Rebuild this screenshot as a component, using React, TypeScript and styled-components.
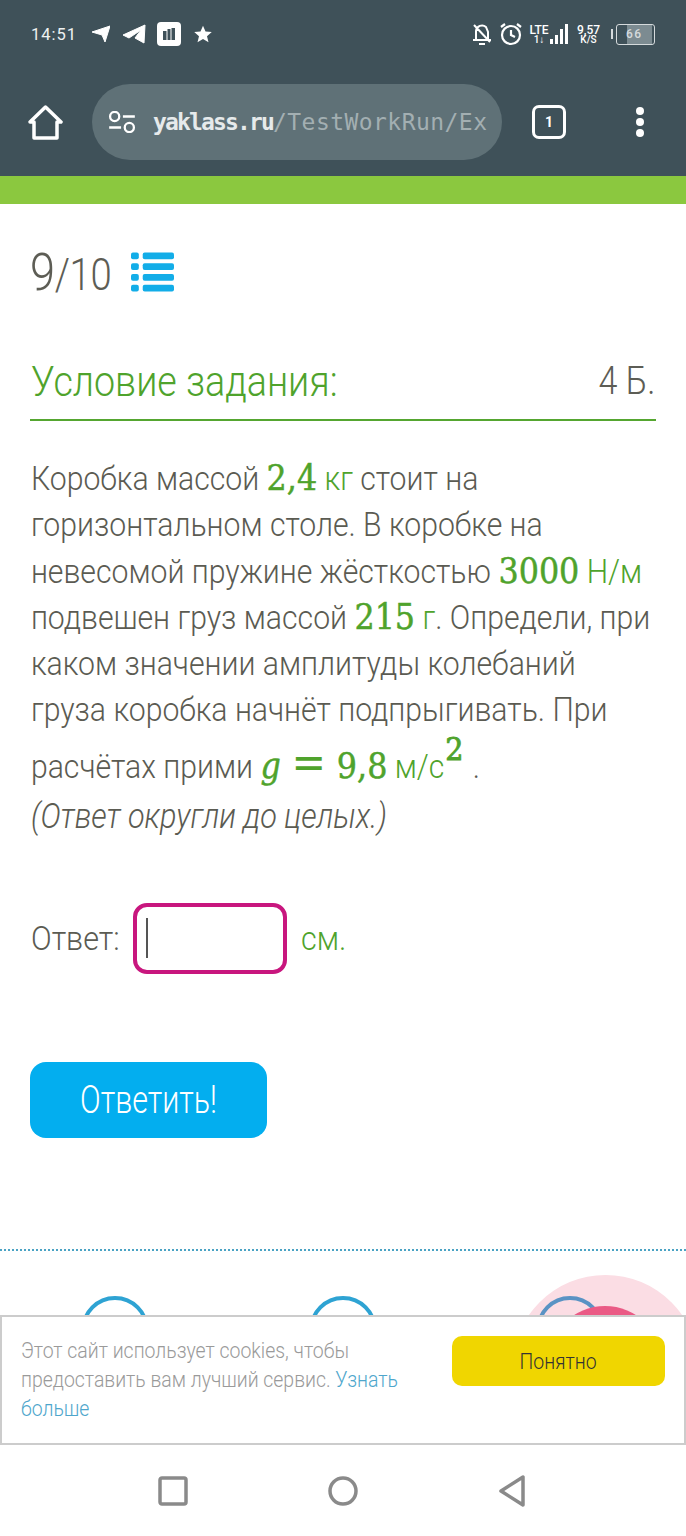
import React from "react";
import styled, { createGlobalStyle, css } from "styled-components";

const Global = createGlobalStyle`
  html, body { margin: 0; padding: 0; background: #fff; }
  body { font-family: Roboto, "Liberation Sans", sans-serif; }
  * { box-sizing: border-box; }
`;
const squeezed = css`
  display: inline-block; white-space: nowrap; transform: scaleX(0.896); transform-origin: left center;
`;
const Page = styled.div`
  position: relative; width: 686px; height: 1536px; overflow: hidden;
  display: flex; flex-direction: column; background: #fff; color: #5b5b52;
`;
const StatusBar = styled.div`
  height: 68px; background: #3f5159; color: #fff; display: flex; align-items: center;
  padding: 0 31px 0 31px; flex: none;
`;
const Clock = styled.span`font: 400 16.5px Roboto, sans-serif; letter-spacing: 1px; width: 61px; color: #eef1f1;`;
const LeftIcons = styled.div`display: flex; align-items: center; gap: 13px; flex: 1;`;
const RightIcons = styled.div`display: flex; align-items: center; gap: 6px;`;
const Tiny = styled.div<{ $w: number }>`
  display: flex; flex-direction: column; align-items: center; font: 500 12px/10px Roboto, sans-serif; width: ${p => p.$w}px;
`;
const TinySub = styled.span`font-size: 10px; line-height: 9px;`;
const Battery = styled.div`
  position: relative; width: 39px; height: 21px; border: 1.5px solid #d5dadc; border-radius: 3px; margin-left: 8px;
  font: 500 12px/18px Roboto, sans-serif; letter-spacing: 1.5px; color: #d5dadc; padding-left: 9px;
  background: linear-gradient(90deg, transparent 0 26%, #7c8b91 26% 94%, transparent 94%);
  &::before { content: ""; position: absolute; left: -6px; top: 4px; width: 2px; height: 10px; background: #d5dadc; }
`;
const Toolbar = styled.div`
  height: 108px; background: #3f5159; display: flex; align-items: center; flex: none; padding: 0 28px;
`;
const Pill = styled.div`
  width: 410px; height: 76px; margin-left: 29px; border-radius: 38px; background: #5f7177;
  display: flex; align-items: center; padding-left: 16px; gap: 17px; overflow: hidden; white-space: nowrap;
`;
const Url = styled.span`
  font: 700 23px "DejaVu Sans Mono", monospace; color: #e6eaeb; letter-spacing: -1.85px;
`;
const UrlRest = styled.span`color: #a3afb2; font-weight: 400; letter-spacing: 0.45px;`;
const TabCount = styled.div`
  width: 34px; height: 34px; border: 3px solid #fff; border-radius: 7px; color: #fff; margin-left: 30px;
  display: flex; align-items: center; justify-content: center; font: 700 14px Roboto, sans-serif;
`;
const Dots = styled.div`
  margin-left: 70px; display: flex; flex-direction: column; gap: 3px;
  & > i { display: block; width: 8px; height: 8px; border-radius: 50%; background: #fff; }
`;
const Accent = styled.div`height: 28px; background: #8bc83f; flex: none;`;
const Main = styled.main`flex: 1; padding: 36px 30px 0; display: flex; flex-direction: column; min-height: 0;`;
const Counter = styled.div`
  display: flex; align-items: center; height: 64px; color: #5d5d55; font-weight: 300;
`;
const CounterText = styled.span`${squeezed}; width: 101px; font-size: 44px; transform: scaleX(0.87); letter-spacing: -0.4px;`;
const CounterNum = styled.span`font-size: 52px;`;
const Heading = styled.div`
  margin-top: 46px; height: 71px; border-bottom: 2px solid #55a630; display: flex; justify-content: space-between;
  align-items: center; font-weight: 300; font-size: 42px; padding: 0 1px 7px;
`;
const HeadingTitle = styled.span`${squeezed}; color: #4fa32c; width: 306px;`;
const Points = styled.span`${squeezed}; color: #5d5d55; font-size: 38px; transform-origin: right center; text-align: right;`;
const Body = styled.div`
  margin-top: 35px; font-size: 33.7px; line-height: 46.3px; font-weight: 300; padding-left: 1px; width: 700px;
  transform: scaleX(0.896); transform-origin: left top; flex: none;
`;
const Line = styled.div<{ $tall?: boolean }>`white-space: nowrap; height: ${p => p.$tall ? "57px" : "46.3px"}; ${p => p.$tall ? "padding-top: 10px;" : ""}`;
const Unit = styled.span`color: #4fa32c;`;
const MathText = styled.span`
  font-family: "DejaVu Serif", serif; font-weight: 400; font-size: 35.5px; line-height: 0; color: #4fa32c;
  -webkit-text-stroke: 0.5px #4fa32c;
`;
const Eq = styled.span`font-family: "DejaVu Sans", sans-serif; font-size: 46px; margin: 0 12px; -webkit-text-stroke: 0; line-height: 0;`;
const Sup = styled.sup`font-size: 32px; line-height: 0; vertical-align: 18px; -webkit-text-stroke: 0.9px #4fa32c; margin-left: 1px; margin-right: 2px;`;
const Hint = styled.div`
  ${squeezed}; font-style: italic; font-size: 34.2px; line-height: 46px; font-weight: 300; padding-left: 1px; margin-top: 2px;
`;
const AnswerRow = styled.div`
  margin-top: 64px; display: flex; align-items: center; font-size: 34px; font-weight: 300; padding-left: 1px;
`;
const AnswerLabel = styled.span`${squeezed}; width: 88px;`;
const AnswerUnit = styled.span`${squeezed}; color: #4fa32c;`;
const Field = styled.div`
  width: 154px; height: 71px; border: 4px solid #c8167e; border-radius: 14px; margin: 0 14px; padding: 11px 0 0 9px; flex: none;
  & > i { display: block; width: 2px; height: 40px; background: #555; }
`;
const Submit = styled.button`
  margin-top: 88px; width: 237px; height: 76px; border: 0; border-radius: 16px; background: #03aeef; color: #fff; padding: 0; flex: none;
  font: 300 38px Roboto, sans-serif;
`;
const SubmitLabel = styled.span`${squeezed}; transform-origin: center; transform: scaleX(0.8);`;
const Divider = styled.div`margin: 111px -30px 0; border-top: 2px dotted #4aa3c4; flex: none;`;
const Decor = styled.div`
  margin: 0 -30px; flex: 1; position: relative; overflow: hidden;
`;
const Blob = styled.div`
  position: absolute; left: 512px; top: 24px; width: 187px; height: 187px; border-radius: 50%; background: #fbdde4;
`;
const Ring = styled.div<{ $x: number; $c: string }>`
  position: absolute; left: ${p => p.$x}px; top: 45px; width: 68px; height: 68px; border-radius: 50%;
  border: 4px solid ${p => p.$c};
`;
const PinkDot = styled.div`
  position: absolute; left: 547px; top: 55px; width: 116px; height: 116px; border-radius: 50%; background: #ea5a85;
`;
const Cookie = styled.div`
  position: absolute; left: 0; top: 1315px; width: 686px; height: 130px; background: #fff; border: 2px solid #ccc;
  display: flex; justify-content: space-between; padding: 19px 19px 0 19px;
`;
const CookieText = styled.div`${squeezed}; font-size: 21.7px; line-height: 29px; font-weight: 300; color: #9a9a9a;`;
const CookieLink = styled.span`color: #4ea6cc;`;
const CookieButton = styled.button`
  width: 213px; height: 50px; border: 0; border-radius: 10px; background: #f0d600; color: #333; padding: 0; flex: none;
  font: 300 21.7px Roboto, sans-serif;
`;
const CookieButtonLabel = styled.span`${squeezed}; transform-origin: center;`;
const NavBar = styled.nav`
  flex: none; height: 91px; display: flex; align-items: center; justify-content: center; gap: 140px; padding-right: 3px;
`;

const Icon = styled.svg`display: block; flex: none;`;

export default function App() {
  return (
    <Page>
      <Global />
      <StatusBar>
        <Clock>14:51</Clock>
        <LeftIcons>
          <Icon width="18" height="18" viewBox="0 0 18 18"><path d="M0 7 18 1 13 17 10 10z" fill="#fff" stroke="#fff" strokeLinejoin="round" /></Icon>
          <Icon width="23" height="20" viewBox="0 0 23 20"><path d="M0 11 22 1 21 19 12 14 18 6 6 14z" fill="#fff" stroke="#fff" strokeLinejoin="round" /></Icon>
          <Icon width="24" height="24" viewBox="0 0 24 24" style={{ marginLeft: -2, marginRight: -1 }}><rect width="24" height="24" rx="4" fill="#fff" /><path d="M6 9h3.500v9H6zM10.500 7h3v11h-3zM14.500 6h3.500v12h-3.500z" fill="#3f5159" /></Icon>
          <Icon width="20" height="20" viewBox="0 0 24 24"><path d="M12 2l3 7 7.500 .7-5.700 5 1.800 7.300L12 18l-6.600 4 1.800-7.300-5.700-5L9 9z" fill="#fff" /></Icon>
        </LeftIcons>
        <RightIcons>
          <Icon width="22" height="24" viewBox="0 0 22 24" fill="none" stroke="#fff" strokeWidth="2"><path d="M5 18V9a6 6 0 0 1 10-4l2 5v8zM2 18h18M3 3l16 17M8 22h6" /></Icon>
          <Icon width="24" height="24" viewBox="0 0 24 24" fill="none" stroke="#fff" strokeWidth="2.200"><circle cx="12" cy="13" r="9" /><path d="M12 8v5l4 2M2 5l4-3M22 5l-4-3" /></Icon>
          <Tiny $w={20}>LTE<TinySub>1↓</TinySub></Tiny>
          <Icon width="19" height="22" viewBox="0 0 19 22" fill="#fff" style={{ marginLeft: -5 }}><rect x="0" y="16" width="3" height="5" /><rect x="5" y="12" width="3" height="9" /><rect x="10" y="6" width="3" height="15" /><rect x="15" y="1" width="3" height="20" /></Icon>
          <Tiny $w={27}>9,57<TinySub>K/S</TinySub></Tiny>
          <Battery>66</Battery>
        </RightIcons>
      </StatusBar>
      <Toolbar>
        <Icon width="35" height="35" viewBox="0 0 35 35" fill="none" stroke="#fff" strokeWidth="3.500" strokeLinejoin="round" strokeLinecap="round"><path d="M2 17 17.500 2 33 17H29V33H6V17z" /></Icon>
        <Pill>
          <Icon width="28" height="22" viewBox="0 0 30 24" fill="none" stroke="#fff" strokeWidth="2.500"><circle cx="7" cy="6" r="5" /><path d="M16 6h13M1 18h13" /><circle cx="23" cy="18" r="5" /></Icon>
          <Url>yaklass.ru<UrlRest>/TestWorkRun/Ex</UrlRest></Url>
        </Pill>
        <TabCount>1</TabCount>
        <Dots><i /><i /><i /></Dots>
      </Toolbar>
      <Accent />
      <Main>
        <Counter>
          <CounterText><CounterNum>9</CounterNum>/10</CounterText>
          <Icon width="43" height="42" viewBox="0 0 44 42" fill="#12ade8"><rect x="0" y="1" width="8" height="7" rx="2" /><rect x="12" y="1" width="32" height="7" rx="2" /><rect x="0" y="12" width="8" height="7" rx="2" /><rect x="12" y="12" width="32" height="7" rx="2" /><rect x="0" y="23" width="8" height="7" rx="2" /><rect x="12" y="23" width="32" height="7" rx="2" /><rect x="0" y="34" width="8" height="7" rx="2" /><rect x="12" y="34" width="32" height="7" rx="2" /></Icon>
        </Counter>
        <Heading><HeadingTitle>Условие задания:</HeadingTitle><Points>4 Б.</Points></Heading>
        <Body>
          <Line>Коробка массой <MathText>2,4</MathText> <Unit>кг</Unit> стоит на</Line>
          <Line>горизонтальном столе. В коробке на</Line>
          <Line>невесомой пружине жёсткостью <MathText>3000</MathText> <Unit>Н/м</Unit></Line>
          <Line>подвешен груз массой <MathText>215</MathText> <Unit>г</Unit>. Определи, при</Line>
          <Line>каком значении амплитуды колебаний</Line>
          <Line>груза коробка начнёт подпрыгивать. При</Line>
          <Line $tall>расчётах прими <MathText><i>g</i><Eq>=</Eq>9,8</MathText> <Unit>м/с</Unit><MathText><Sup>2</Sup></MathText> .</Line>
        </Body>
        <Hint>(Ответ округли до целых.)</Hint>
        <AnswerRow><AnswerLabel>Ответ:</AnswerLabel><Field><i /></Field><AnswerUnit>см.</AnswerUnit></AnswerRow>
        <Submit><SubmitLabel>Ответить!</SubmitLabel></Submit>
        <Divider />
        <Decor>
          <Blob />
          <Ring $x={81} $c="#2ea3d3" />
          <Ring $x={309} $c="#2ea3d3" />
          <Ring $x={536} $c="#5a93c4" />
          <PinkDot />
        </Decor>
      </Main>
      <Cookie>
        <CookieText>Этот сайт использует cookies, чтобы<br />предоставить вам лучший сервис. <CookieLink>Узнать<br />больше</CookieLink></CookieText>
        <CookieButton><CookieButtonLabel>Понятно</CookieButtonLabel></CookieButton>
      </Cookie>
      <NavBar>
        <Icon width="30" height="30" viewBox="0 0 30 30" fill="none" stroke="#8a8a8a" strokeWidth="3.500"><rect x="2" y="2" width="26" height="26" rx="2" /></Icon>
        <Icon width="30" height="30" viewBox="0 0 30 30" fill="none" stroke="#8a8a8a" strokeWidth="3.500"><circle cx="15" cy="15" r="13" /></Icon>
        <Icon width="28" height="32" viewBox="0 0 28 32" fill="none" stroke="#8a8a8a" strokeWidth="3.500" strokeLinejoin="round"><path d="M25 2V30L3 16z" /></Icon>
      </NavBar>
    </Page>
  );
}
